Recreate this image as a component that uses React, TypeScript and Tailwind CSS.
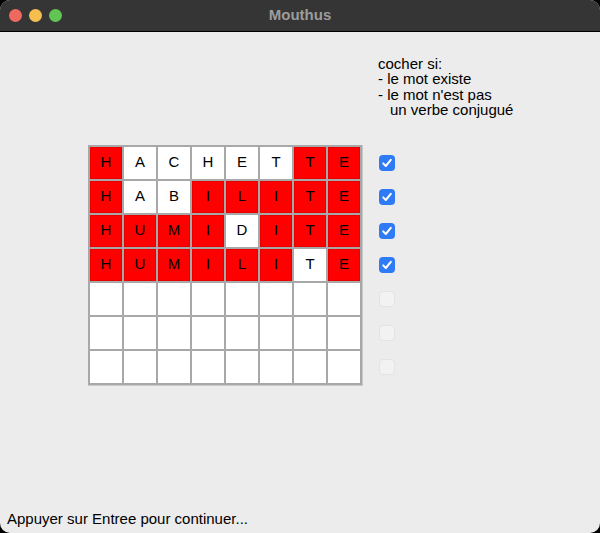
import React from "react";

const rows: { l: string; red: boolean }[][] = [
  "HACHETTE".split("").map((l, i) => ({ l, red: i === 0 || i >= 6 })),
  "HABILITE".split("").map((l, i) => ({ l, red: i === 0 || i >= 3 })),
  "HUMIDITE".split("").map((l, i) => ({ l, red: i !== 4 })),
  "HUMILITE".split("").map((l, i) => ({ l, red: i !== 6 })),
  ...Array.from({ length: 3 }, () => Array.from({ length: 8 }, () => ({ l: "", red: false }))),
];
const checked = [true, true, true, true, false, false, false];

function Check({ on }: { on: boolean }) {
  if (on)
    return (
      <div className="w-[16px] h-[16px] rounded-[4px] bg-[#2f7bf5] flex items-center justify-center">
        <svg width="12" height="12" viewBox="0 0 12 12">
          <path d="M2.2 6.4 L4.8 9 L9.8 2.8" stroke="white" strokeWidth="2" fill="none" strokeLinecap="round" strokeLinejoin="round" />
        </svg>
      </div>
    );
  return <div className="w-[16px] h-[16px] rounded-[4px] bg-[#f2f2f2] border border-[#e3e3e3]" />;
}

export default function App() {
  return (
    <div className="w-[600px] h-[533px] bg-black" style={{ fontFamily: '"Liberation Sans", Arial, sans-serif' }}>
      <div className="w-[600px] h-[533px] rounded-[10px] overflow-hidden flex flex-col bg-[#ececec]">
        <div className="h-[32px] bg-[#353535] border-b border-black flex items-center relative shrink-0">
          <div className="flex gap-[7px] pl-[9px]">
            <div className="w-[13px] h-[13px] rounded-full bg-[#ee6a5f]" />
            <div className="w-[13px] h-[13px] rounded-full bg-[#f5bf4f]" />
            <div className="w-[13px] h-[13px] rounded-full bg-[#61c554]" />
          </div>
          <div className="absolute inset-0 flex items-center justify-center text-[15px] font-bold text-[#9c9c9c]">Mouthus</div>
        </div>
        <div className="flex-1 relative flex flex-col">
          <div className="pl-[378px] pt-[24px] text-[15px] leading-[15.4px] text-black">
            <div>cocher si:</div>
            <div>- le mot existe</div>
            <div>- le mot n'est pas</div>
            <div className="pl-[12px]">un verbe conjugué</div>
          </div>
          <div className="flex pl-[88px] pt-[27px] gap-[16px]">
            <div className="bg-[#a8a8a8] p-[2px] grid grid-cols-[repeat(8,32px)] gap-[2px] border-r border-b border-[#c8c8c8]">
              {rows.flat().map((c, i) => (
                <div
                  key={i}
                  className={
                    "h-[32px] flex items-center justify-center text-[15px] text-black " +
                    (c.red ? "bg-[#ff0000] border border-[#e80000]" : "bg-white")
                  }
                >
                  {c.l}
                </div>
              ))}
            </div>
            <div className="flex flex-col pt-[10px] gap-[18px]">
              {checked.map((c, i) => (
                <Check key={i} on={c} />
              ))}
            </div>
          </div>
          <div className="mt-auto pl-[7px] pb-[3px] text-[15px] text-black">Appuyer sur Entree pour continuer...</div>
        </div>
      </div>
    </div>
  );
}
